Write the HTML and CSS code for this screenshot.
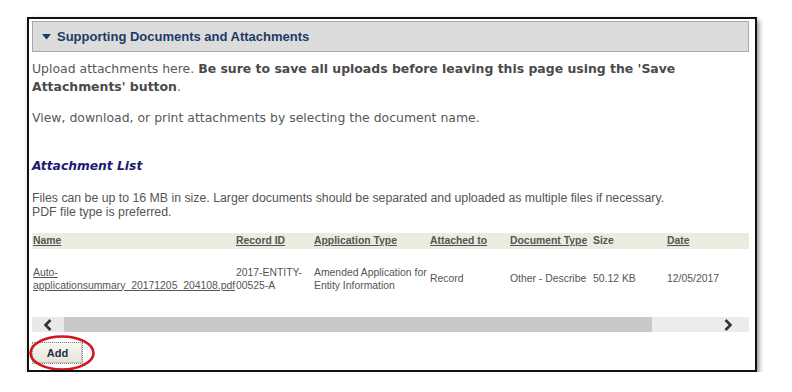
FILE: index.html
```html
<!DOCTYPE html>
<html>
<head>
<meta charset="utf-8">
<link rel="stylesheet" href="styles.css">
</head>
<body>
<div class="frame">
  <div class="section-head">
    <svg class="caret" width="9" height="6" viewBox="0 0 9 6"><path d="M0 0 L9 0 L4.5 5.5 Z" fill="#1d3a66"/></svg>
    <span>Supporting Documents and Attachments</span>
  </div>
  <p class="intro">Upload attachments here. <b>Be sure to save all uploads before leaving this page using the 'Save Attachments' button</b>.</p>
  <p class="intro view">View, download, or print attachments by selecting the document name.</p>
  <h2 class="list-title">Attachment List</h2>
  <p class="note">Files can be up to 16 MB in size. Larger documents should be separated and uploaded as multiple files if necessary.<br>PDF file type is preferred.</p>
  <table class="grid">
    <colgroup>
      <col class="c-name"><col class="c-rec"><col class="c-app"><col class="c-att"><col class="c-doc"><col class="c-size"><col class="c-date">
    </colgroup>
    <thead>
      <tr>
        <th><a>Name</a></th>
        <th><a>Record ID</a></th>
        <th><a>Application Type</a></th>
        <th><a>Attached to</a></th>
        <th><a>Document Type</a></th>
        <th>Size</th>
        <th><a>Date</a></th>
      </tr>
    </thead>
    <tbody>
      <tr>
        <td><a>Auto-<br>applicationsummary_20171205_204108.pdf</a></td>
        <td>2017-ENTITY-<br>00525-A</td>
        <td>Amended Application for Entity Information</td>
        <td>Record</td>
        <td>Other - Describe</td>
        <td>50.12 KB</td>
        <td>12/05/2017</td>
      </tr>
    </tbody>
  </table>
  <div class="hscroll">
    <div class="sbtn"><svg width="10" height="12" viewBox="0 0 10 12"><path d="M7.5 1 L2.5 6 L7.5 11" fill="none" stroke="#333" stroke-width="2.6"/></svg></div>
    <div class="thumb"></div>
    <div class="track"><svg width="10" height="12" viewBox="0 0 10 12"><path d="M2.5 1 L7.5 6 L2.5 11" fill="none" stroke="#333" stroke-width="2.6"/></svg></div>
  </div>
  <div class="actions">
    <button class="add">Add</button>
    <svg class="ring" width="68" height="38" viewBox="0 0 68 38"><ellipse cx="34" cy="19" rx="31.5" ry="16.5" fill="none" stroke="#d0151b" stroke-width="2.6"/></svg>
  </div>
</div>
</body>
</html>
```
FILE: styles.css
```css
html, body {
  margin: 0;
  padding: 0;
  background: #ffffff;
}
body {
  padding: 17px 0 0 27px;
}
.frame {
  box-sizing: border-box;
  width: 730px;
  height: 355px;
  border: 2px solid #111;
  padding: 2px 6px 0 3px;
  box-shadow: 2px 3px 5px rgba(0,0,0,0.45);
  background: #fff;
  overflow: hidden;
}
.section-head {
  box-sizing: border-box;
  height: 31px;
  background: #dcdcdc;
  border: 1px solid #a9a9a9;
  display: flex;
  align-items: center;
  padding-left: 9px;
  gap: 6px;
  font-family: "Liberation Sans", Arial, sans-serif;
  font-weight: bold;
  font-size: 13px;
  color: #1d3a66;
}
.caret { margin-top: 1px; }
.intro {
  margin: 8px 0 0 0;
  font-family: "DejaVu Sans", Verdana, sans-serif;
  font-size: 12.45px;
  line-height: 18px;
  color: #585858;
  width: 660px;
}
.intro b { color: #4a4a4a; }
.intro.view { margin-top: 13px; }
.list-title {
  margin: 30px 0 0 0;
  font-family: "DejaVu Sans", Verdana, sans-serif;
  font-size: 12.3px;
  line-height: 18px;
  font-weight: bold;
  font-style: italic;
  color: #1b1b70;
}
.note {
  margin: 16px 0 0 0;
  font-family: "Liberation Sans", Arial, sans-serif;
  font-size: 12.3px;
  line-height: 14px;
  color: #555;
}
.grid {
  margin-top: 14px;
  width: 717px;
  border-collapse: collapse;
  table-layout: fixed;
  font-family: "Liberation Sans", Arial, sans-serif;
  font-size: 10.4px;
  color: #555;
}
.c-name { width: 203px; }
.c-rec { width: 78px; }
.c-app { width: 116px; }
.c-att { width: 80px; }
.c-doc { width: 83px; }
.c-size { width: 74px; }
.c-date { width: 83px; }
.grid th {
  background: #ecebe0;
  height: 16px;
  padding: 0 0 0 1px;
  text-align: left;
  font-weight: bold;
  line-height: 14px;
  white-space: nowrap;
}
.grid a {
  text-decoration: underline;
  color: #555;
}
.grid td {
  height: 59px;
  padding: 0 0 0 1px;
  vertical-align: middle;
  line-height: 13px;
}
.hscroll {
  margin-top: 9px;
  width: 717px;
  height: 15px;
  display: flex;
}
.sbtn {
  width: 32px;
  background: #e9e9e9;
  display: flex;
  align-items: center;
  justify-content: center;
}
.thumb {
  width: 588px;
  background: #c9c9c9;
}
.track {
  flex: 1;
  background: #ececec;
  display: flex;
  align-items: center;
  justify-content: flex-end;
  padding-right: 16px;
}
.actions {
  position: relative;
  margin-top: 10px;
}
.add {
  display: block;
  width: 51px;
  height: 22px;
  margin: 0;
  padding: 0;
  border: 1px dotted #7a8aa8;
  background: linear-gradient(#f8f7f1, #e6e3d6);
  box-shadow: inset -1px -1px 0 #c9c5b6;
  font-family: "Liberation Sans", Arial, sans-serif;
  font-weight: bold;
  font-size: 11px;
  color: #1d2d4a;
}
.ring {
  position: absolute;
  left: -4px;
  top: -8px;
}
```
